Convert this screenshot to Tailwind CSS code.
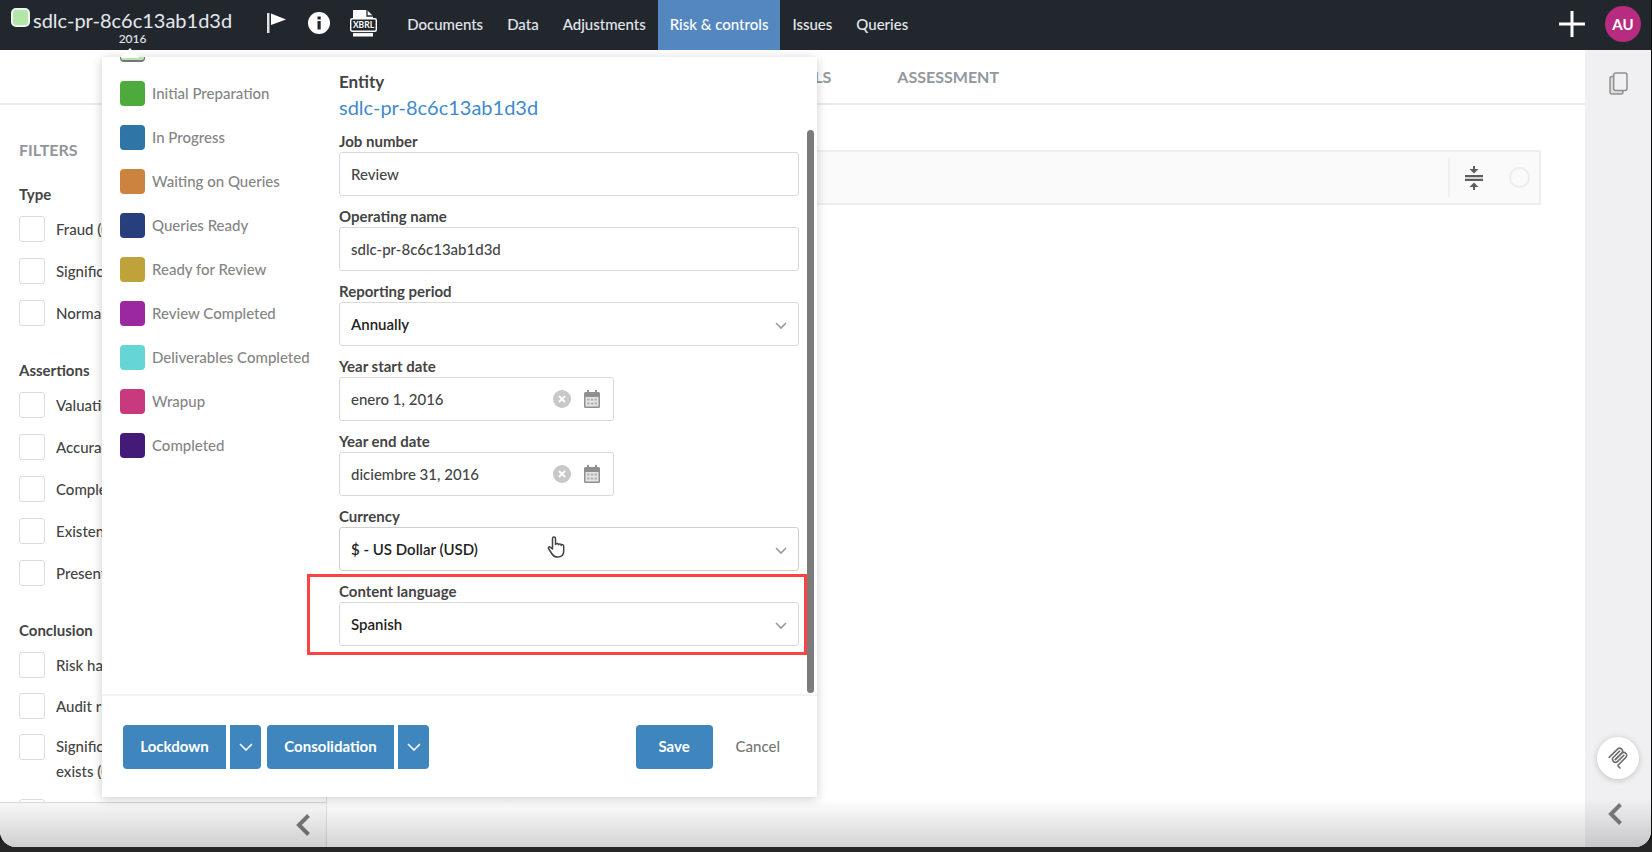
<!DOCTYPE html>
<html lang="en">
<head>
  <meta charset="UTF-8" />
  <meta name="viewport" content="width=device-width, initial-scale=1.0" />
  <title>Risk &amp; controls</title>
  <script src="https://cdn.jsdelivr.net/npm/@tailwindcss/browser@4"></script>
</head>
<body class="bg-[#0c0c0c] font-['Lato',sans-serif] text-[15px] font-medium text-[#444]">
  <div class="h-screen pb-[5px] pr-px bg-linear-to-t from-[#262626] from-1% to-[#0c0c0c] to-2%">
    <div class="relative h-full flex flex-col bg-white rounded-b-[16px] overflow-hidden">

      <!-- top bar -->
      <header class="flex h-[50px] shrink-0 bg-[#22272d] text-[#e4e8ee]">
        <div class="relative flex flex-col items-center pl-[33px] pt-[7px]">
          <span class="absolute left-[11px] top-[8px] size-[19px] rounded-[5px] border-2 border-[#eef5ee] bg-[#b5e6a9]"></span>
          <h1 class="text-[20px] leading-[26px] font-normal">sdlc-pr-8c6c13ab1d3d</h1>
          <span class="text-[12px] leading-[12px]">2016</span>
        </div>
        <div class="flex items-center pl-[34px] pb-[4px] gap-[20px]">
          <button aria-label="Flag"><svg width="22" height="22" viewBox="0 0 22 22"><path d="M1 1h2.500v20H1z" fill="#dfe3e8"/><path d="M5 1.500l15 6L5 13z" fill="#fff"/></svg></button>
          <button aria-label="Information"><svg width="22" height="22" viewBox="0 0 22 22"><circle cx="11" cy="11" r="11" fill="#fff"/><path d="M9.500 4.500h3.200v3H9.500zM9.500 9h3.200v8.500H9.500z" fill="#22272d"/></svg></button>
          <button aria-label="XBRL">
            <svg width="27" height="27" viewBox="0 0 27 27"><path d="M3 0h14l6 6v20.500H3z" fill="#fff"/><path d="M17 0v6h6" fill="none" stroke="#22272d" stroke-width="1.300"/><rect x=".7" y="8.700" width="25.600" height="12.600" rx="1.500" fill="#22272d" stroke="#fff" stroke-width="1.400"/><path d="M3 22.600h20" stroke="#22272d" stroke-width="1"/><text x="13.500" y="18" text-anchor="middle" font-size="8.500" font-weight="700" fill="#fff" font-family="Lato">XBRL</text></svg>
          </button>
        </div>
        <nav class="flex pl-[18px]">
          <a href="#" class="flex items-center px-[12px] pb-[2px]">Documents</a>
          <a href="#" class="flex items-center px-[12px] pb-[2px]">Data</a>
          <a href="#" class="flex items-center px-[12px] pb-[2px]">Adjustments</a>
          <a href="#" class="flex items-center px-[12px] pb-[2px] bg-[#5487c0] text-white">Risk &amp; controls</a>
          <a href="#" class="flex items-center px-[12px] pb-[2px]">Issues</a>
          <a href="#" class="flex items-center px-[12px] pb-[2px]">Queries</a>
        </nav>
        <div class="ml-auto flex items-center gap-[20px] pr-[10px] pb-[2px]">
          <button aria-label="Add"><svg width="26" height="26" viewBox="0 0 26 26" stroke="#fff" stroke-width="3"><path d="M13 0v26M0 13h26"/></svg></button>
          <button class="size-[36px] rounded-full bg-[#b72c80] font-bold text-white">AU</button>
        </div>
      </header>

      <div class="flex flex-1 min-h-0">
        <div class="flex flex-1 flex-col min-w-0">
          <!-- tabs -->
          <div class="flex h-[55px] shrink-0 items-center gap-[66px] border-b-2 border-[#ebebeb] pl-[746px] text-[16px] font-bold text-[#92989e]">
            <a href="#">CONTROLS</a>
            <a href="#">ASSESSMENT</a>
          </div>

          <div class="flex flex-1 min-h-0">
            <!-- filters -->
            <aside class="flex w-[327px] shrink-0 flex-col border-r border-[#e2e2e2]">
              <div class="flex-1 min-h-0 overflow-hidden pl-[19px] pt-[35px]">
                <h2 class="text-[16px] leading-[20px] font-bold text-[#92969b]">FILTERS</h2>
                <h3 class="mt-[24px] leading-[20px] font-bold">Type</h3>
                <div class="mt-[12px] flex flex-col gap-[16px]">
                  <label class="flex gap-[11px] leading-[26px]"><input type="checkbox" class="size-[26px] shrink-0 appearance-none rounded-[3px] border border-[#dcdcdc]">Fraud (0)</label>
                  <label class="flex gap-[11px] leading-[26px]"><input type="checkbox" class="size-[26px] shrink-0 appearance-none rounded-[3px] border border-[#dcdcdc]">Significant</label>
                  <label class="flex gap-[11px] leading-[26px]"><input type="checkbox" class="size-[26px] shrink-0 appearance-none rounded-[3px] border border-[#dcdcdc]">Normal</label>
                </div>
                <h3 class="mt-[34px] leading-[20px] font-bold">Assertions</h3>
                <div class="mt-[12px] flex flex-col gap-[16px]">
                  <label class="flex gap-[11px] leading-[26px]"><input type="checkbox" class="size-[26px] shrink-0 appearance-none rounded-[3px] border border-[#dcdcdc]">Valuation</label>
                  <label class="flex gap-[11px] leading-[26px]"><input type="checkbox" class="size-[26px] shrink-0 appearance-none rounded-[3px] border border-[#dcdcdc]">Accuracy</label>
                  <label class="flex gap-[11px] leading-[26px]"><input type="checkbox" class="size-[26px] shrink-0 appearance-none rounded-[3px] border border-[#dcdcdc]">Completeness</label>
                  <label class="flex gap-[11px] leading-[26px]"><input type="checkbox" class="size-[26px] shrink-0 appearance-none rounded-[3px] border border-[#dcdcdc]">Existence</label>
                  <label class="flex gap-[11px] leading-[26px]"><input type="checkbox" class="size-[26px] shrink-0 appearance-none rounded-[3px] border border-[#dcdcdc]">Presentation</label>
                </div>
                <h3 class="mt-[34px] leading-[20px] font-bold">Conclusion</h3>
                <div class="mt-[12px] flex flex-col gap-[15px]">
                  <label class="flex gap-[11px] leading-[26px]"><input type="checkbox" class="size-[26px] shrink-0 appearance-none rounded-[3px] border border-[#dcdcdc]">Risk has</label>
                  <label class="flex gap-[11px] leading-[26px]"><input type="checkbox" class="size-[26px] shrink-0 appearance-none rounded-[3px] border border-[#dcdcdc]">Audit risk</label>
                  <label class="flex gap-[11px] leading-[25px]"><input type="checkbox" class="size-[26px] shrink-0 appearance-none rounded-[3px] border border-[#dcdcdc]"><span>Significant<br>exists (0)</span></label>
                  <input type="checkbox" aria-label="Other" class="size-[26px] shrink-0 appearance-none rounded-[3px] border border-[#dcdcdc]">
                </div>
              </div>
              <div class="flex h-[45px] items-center justify-end border-t border-[#d9d9d9] bg-[#fafafa] pr-[16px]">
                <button aria-label="Collapse filters"><svg width="14" height="22" viewBox="0 0 14 22" fill="none" stroke="#7c7c7c" stroke-width="4"><path d="M12.500 1.500L3 11l9.500 9.500"/></svg></button>
              </div>
            </aside>

            <main class="flex-1 min-w-0 pl-[30px] pr-[44px] pt-[45px]">
              <div class="flex h-[55px] items-center justify-end border-2 border-[#eeeeee] bg-[#fafafa] pr-[9px]">
                <div class="flex h-[39px] items-center gap-[26px] border-l-2 border-[#f0f0f0] pl-[15px]">
                  <button aria-label="Collapse all"><svg width="18" height="24" viewBox="0 0 18 24" fill="#5e5e5e"><path d="M0 9h18v2.200H0zM0 12.800h18V15H0zM8 0h2v3h3.500L9 7.500 4.500 3H8zM8 24h2v-3h3.500L9 16.500 4.500 21H8z"/></svg></button>
                  <span class="size-[21px] rounded-full border-2 border-[#ededed]"></span>
                </div>
              </div>
            </main>
          </div>
        </div>

        <!-- right rail -->
        <aside class="flex w-[66px] shrink-0 flex-col items-center bg-[#f0f0f2] pt-[22px] pb-[22px]">
          <button aria-label="Copy"><svg width="19" height="23" viewBox="0 0 19 23" fill="#f0f0f2" stroke="#909090" stroke-width="1.500"><path d="M4.500 4.500H3a2 2 0 0 0-2 2V20a2 2 0 0 0 2 2h9a2 2 0 0 0 2-2v-1" fill="#dcdcdc"/><rect x="4.700" y="1" width="13.300" height="17.500" rx="2"/></svg></button>
          <button aria-label="Assistant" class="relative z-10 mt-auto flex size-[42px] items-center justify-center rounded-full bg-white shadow-[0_1px_6px_rgba(0,0,0,0.2)]">
            <svg width="22" height="22" viewBox="0 0 180 180" fill="none" stroke="#6f6f6f" stroke-width="13" stroke-linecap="round"><path d="M18 85L86 17c9.400-9.400 24.600-9.400 34 0s9.400 24.600 0 34L68.500 102"/><path d="M69 101.500L120 51c9.400-9.400 24.600-9.400 34 0s9.400 24.800 0 34L92.700 146.600c-3 3-3 8 0 11.300l12.600 12.600"/><path d="M103 34L52.600 84c-9.400 9.400-9.400 24.600 0 34s24.600 9.400 34 0L137 68"/></svg>
          </button>
          <button aria-label="Expand panel" class="mt-[24px]"><svg width="20" height="22" viewBox="0 0 20 22" fill="none" stroke="#7c7c7c" stroke-width="4"><path d="M12.500 1.500L3 11l9.500 9.500"/></svg></button>
        </aside>
      </div>

      <div class="pointer-events-none absolute inset-x-0 bottom-0 h-[48px] bg-linear-to-b from-black/0 to-black/17"></div>

      <!-- engagement popover -->
      <svg class="absolute left-[121px] top-[48px] z-20" width="18" height="10" viewBox="0 0 18 10" fill="#fff"><path d="M9 0l9 10H0z"/></svg>
      <form class="absolute left-[102px] top-[57px] z-10 w-[715px] bg-white shadow-[0_2px_10px_rgba(0,0,0,0.2)]">
        <div class="flex h-[639px] overflow-hidden border-b-2 border-[#f3f3f3]">
          <ul class="-mt-[20px] flex w-[237px] shrink-0 flex-col gap-[19px] pl-[18px] leading-[25px] text-[#858585]">
            <li class="flex h-[25px] gap-[7px]"><span class="size-[25px] rounded-[4px] border border-b-2 border-[#777] bg-[#b5e6a9]"></span></li>
            <li class="flex gap-[7px]"><span class="size-[25px] rounded-[4px] bg-[#4dab3e]"></span>Initial Preparation</li>
            <li class="flex gap-[7px]"><span class="size-[25px] rounded-[4px] bg-[#2f76a6]"></span>In Progress</li>
            <li class="flex gap-[7px]"><span class="size-[25px] rounded-[4px] bg-[#cd8340]"></span>Waiting on Queries</li>
            <li class="flex gap-[7px]"><span class="size-[25px] rounded-[4px] bg-[#27407d]"></span>Queries Ready</li>
            <li class="flex gap-[7px]"><span class="size-[25px] rounded-[4px] bg-[#c0a23a]"></span>Ready for Review</li>
            <li class="flex gap-[7px]"><span class="size-[25px] rounded-[4px] bg-[#9c28a0]"></span>Review Completed</li>
            <li class="flex gap-[7px]"><span class="size-[25px] rounded-[4px] bg-[#66d5d6]"></span>Deliverables Completed</li>
            <li class="flex gap-[7px]"><span class="size-[25px] rounded-[4px] bg-[#c8397d]"></span>Wrapup</li>
            <li class="flex gap-[7px]"><span class="size-[25px] rounded-[4px] bg-[#441a78]"></span>Completed</li>
          </ul>
          <div class="flex flex-1 flex-col">
            <p class="pt-[13px] text-[17px] leading-[24px] font-bold">Entity</p>
            <a href="#" class="text-[20px] leading-[26px] font-normal text-[#3f8acb]">sdlc-pr-8c6c13ab1d3d</a>
            <div class="mt-[10px] flex items-start justify-between pr-[3px]">
              <div class="relative w-[460px] pt-[1px]">
                <label for="job" class="block leading-[21px] font-bold">Job number</label>
                <input id="job" type="text" value="Review" class="mb-[10px] block h-[44px] w-full rounded-[3px] border border-[#d9d9d9] px-[11px]">
                <label for="opname" class="block leading-[21px] font-bold">Operating name</label>
                <input id="opname" type="text" value="sdlc-pr-8c6c13ab1d3d" class="mb-[10px] block h-[44px] w-full rounded-[3px] border border-[#d9d9d9] px-[11px]">
                <label for="period" class="block leading-[21px] font-bold">Reporting period</label>
                <div class="relative mb-[10px]">
                  <select id="period" class="block h-[44px] w-full appearance-none rounded-[3px] border border-[#d9d9d9] px-[11px] font-semibold text-[#222]"><option>Annually</option></select>
                  <svg class="absolute right-[12px] top-[20px]" width="12" height="8" viewBox="0 0 12 8" fill="none" stroke="#999" stroke-width="1.600"><path d="M1 1l5 5 5-5"/></svg>
                </div>
                <label for="start" class="block leading-[21px] font-bold">Year start date</label>
                <div class="relative mb-[10px] w-[275px]">
                  <input id="start" type="text" value="enero 1, 2016" class="block h-[44px] w-full rounded-[3px] border border-[#d9d9d9] px-[11px]">
                  <div class="absolute right-[14px] top-[13px] flex items-center gap-[13px]">
                    <button type="button" aria-label="Clear start date"><svg width="18" height="18" viewBox="0 0 18 18"><circle cx="9" cy="9" r="9" fill="#c8c8c8"/><path d="M6 6l6 6M12 6l-6 6" stroke="#fff" stroke-width="1.800"/></svg></button>
                    <button type="button" aria-label="Pick start date"><svg width="16" height="18" viewBox="0 0 16 18"><path d="M3 0h2v2h6V0h2v2h1.500A1.500 1.500 0 0 1 16 3.500v13a1.500 1.500 0 0 1-1.500 1.500h-13A1.500 1.500 0 0 1 0 16.500v-13A1.500 1.500 0 0 1 1.500 2H3z" fill="#8f8f8f"/><path d="M1.500 7h13v9.500h-13z" fill="#e4e4e4"/><path d="M3 8.500h2.500v2H3zM6.800 8.500h2.500v2H6.800zM10.500 8.500H13v2h-2.500zM3 12.500h2.500v2H3zM6.800 12.500h2.500v2H6.800zM10.500 12.500H13v2h-2.500z" fill="#b0b0b0"/></svg></button>
                  </div>
                </div>
                <label for="end" class="block leading-[21px] font-bold">Year end date</label>
                <div class="relative mb-[10px] w-[275px]">
                  <input id="end" type="text" value="diciembre 31, 2016" class="block h-[44px] w-full rounded-[3px] border border-[#d9d9d9] px-[11px]">
                  <div class="absolute right-[14px] top-[13px] flex items-center gap-[13px]">
                    <button type="button" aria-label="Clear end date"><svg width="18" height="18" viewBox="0 0 18 18"><circle cx="9" cy="9" r="9" fill="#c8c8c8"/><path d="M6 6l6 6M12 6l-6 6" stroke="#fff" stroke-width="1.800"/></svg></button>
                    <button type="button" aria-label="Pick end date"><svg width="16" height="18" viewBox="0 0 16 18"><path d="M3 0h2v2h6V0h2v2h1.500A1.500 1.500 0 0 1 16 3.500v13a1.500 1.500 0 0 1-1.500 1.500h-13A1.500 1.500 0 0 1 0 16.500v-13A1.500 1.500 0 0 1 1.500 2H3z" fill="#8f8f8f"/><path d="M1.500 7h13v9.500h-13z" fill="#e4e4e4"/><path d="M3 8.500h2.500v2H3zM6.800 8.500h2.500v2H6.800zM10.500 8.500H13v2h-2.500zM3 12.500h2.500v2H3zM6.800 12.500h2.500v2H6.800zM10.500 12.500H13v2h-2.500z" fill="#b0b0b0"/></svg></button>
                  </div>
                </div>
                <label for="currency" class="block leading-[21px] font-bold">Currency</label>
                <div class="relative mb-[10px]">
                  <select id="currency" class="block h-[44px] w-full appearance-none rounded-[3px] border border-[#cfcfcf] px-[11px] font-semibold text-[#222]"><option>$ - US Dollar (USD)</option></select>
                  <svg class="absolute right-[12px] top-[20px]" width="12" height="8" viewBox="0 0 12 8" fill="none" stroke="#999" stroke-width="1.600"><path d="M1 1l5 5 5-5"/></svg>
                  <svg class="absolute left-[208px] top-[9px]" width="18" height="22" viewBox="0 0 18 22" fill="#fff" stroke="#444" stroke-width="1.500" stroke-linejoin="round"><path d="M5.500 13V2.500a1.500 1.500 0 0 1 3 0V8.500l.5-.5a1.400 1.400 0 0 1 2.500.8 1.400 1.400 0 0 1 2.700.6 1.300 1.300 0 0 1 2.500.6V15c0 4-2.500 6-6 6-3 0-4.500-1-6-3.500L1.500 12.500c-.6-1.200.7-2.300 1.800-1.300z"/></svg>
                </div>
                <label for="language" class="block leading-[21px] font-bold">Content language</label>
                <div class="relative">
                  <select id="language" class="block h-[44px] w-full appearance-none rounded-[3px] border border-[#d9d9d9] px-[11px] font-semibold text-[#222]"><option>Spanish</option></select>
                  <svg class="absolute right-[12px] top-[20px]" width="12" height="8" viewBox="0 0 12 8" fill="none" stroke="#999" stroke-width="1.600"><path d="M1 1l5 5 5-5"/></svg>
                </div>
                <div class="pointer-events-none absolute -left-[32px] -right-[8px] -bottom-[9px] h-[81px] border-3 border-[#ff4344]"></div>
              </div>
              <div class="h-[563px] w-[7px] rounded-full bg-[#7b7b7b]"></div>
            </div>
          </div>
        </div>
        <div class="flex h-[101px] items-center pl-[21px] pr-[37px] font-bold text-white">
          <button type="button" class="h-[44px] w-[103px] rounded-l-[4px] bg-[#3f85be]">Lockdown</button>
          <button type="button" aria-label="Lockdown options" class="ml-[4px] flex h-[44px] w-[31px] items-center justify-center rounded-r-[4px] bg-[#3f85be]"><svg width="14" height="8" viewBox="0 0 14 8" fill="none" stroke="#fff" stroke-width="1.600"><path d="M1 1l6 6 6-6"/></svg></button>
          <button type="button" class="ml-[6px] h-[44px] w-[127px] rounded-l-[4px] bg-[#3f85be]">Consolidation</button>
          <button type="button" aria-label="Consolidation options" class="ml-[4px] flex h-[44px] w-[31px] items-center justify-center rounded-r-[4px] bg-[#3f85be]"><svg width="14" height="8" viewBox="0 0 14 8" fill="none" stroke="#fff" stroke-width="1.600"><path d="M1 1l6 6 6-6"/></svg></button>
          <button type="submit" class="ml-auto h-[44px] w-[77px] rounded-[4px] bg-[#3f85be]">Save</button>
          <button type="button" class="ml-[23px] font-medium text-[#777]">Cancel</button>
        </div>
      </form>
    </div>
  </div>
</body>
</html>
